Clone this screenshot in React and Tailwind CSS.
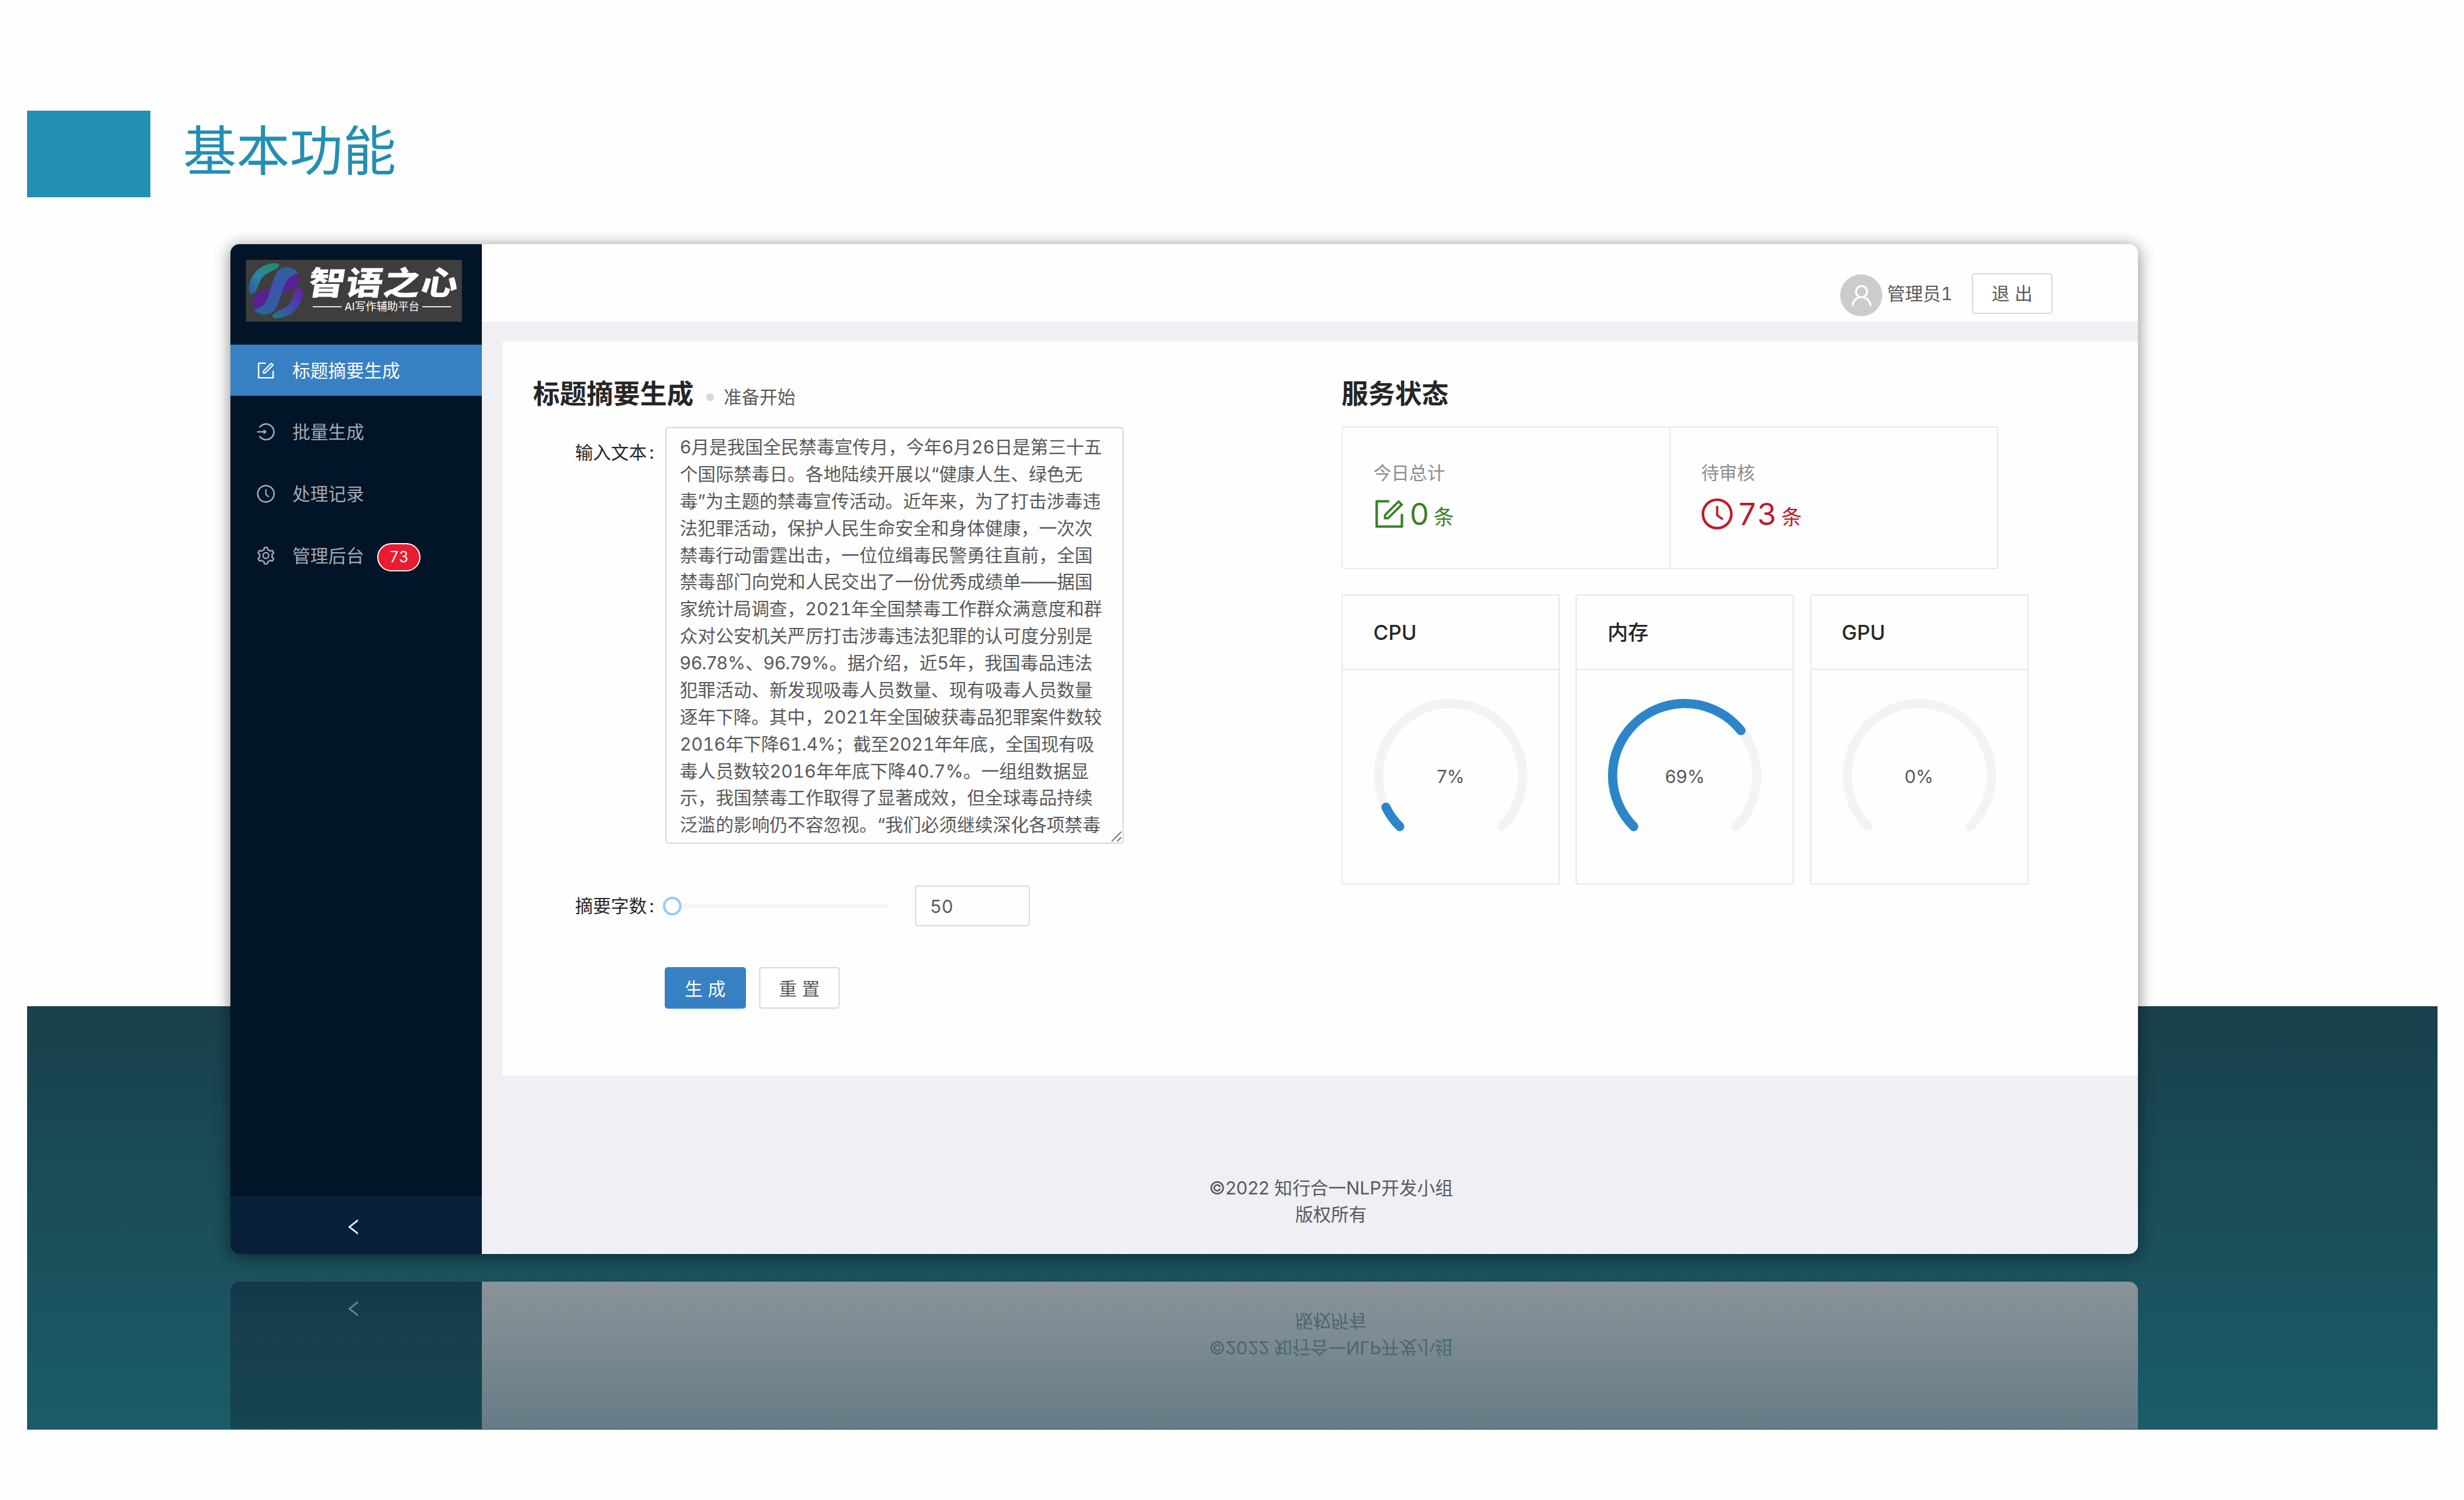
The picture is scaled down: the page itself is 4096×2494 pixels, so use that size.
import React from "react";
import {
  AiOutlineForm,
  AiOutlineLogin,
  AiOutlineClockCircle,
  AiOutlineSetting,
  AiOutlineUser,
  AiOutlineLeft,
} from "react-icons/ai";

const articleLines = [
  { text: "6月是我国全民禁毒宣传月，今年6月26日是第三十五", fit: "tracking-[-0.1px]" },
  { text: "个国际禁毒日。各地陆续开展以“健康人生、绿色无" },
  { text: "毒”为主题的禁毒宣传活动。近年来，为了打击涉毒违" },
  { text: "法犯罪活动，保护人民生命安全和身体健康，一次次" },
  { text: "禁毒行动雷霆出击，一位位缉毒民警勇往直前，全国" },
  { text: "禁毒部门向党和人民交出了一份优秀成绩单——据国" },
  { text: "家统计局调查，2021年全国禁毒工作群众满意度和群", fit: "tracking-[-0.1px]" },
  { text: "众对公安机关严厉打击涉毒违法犯罪的认可度分别是" },
  { text: "96.78%、96.79%。据介绍，近5年，我国毒品违法", fit: "normal-nums tracking-[0.12px]" },
  { text: "犯罪活动、新发现吸毒人员数量、现有吸毒人员数量" },
  { text: "逐年下降。其中，2021年全国破获毒品犯罪案件数较", fit: "tracking-[-0.1px]" },
  { text: "2016年下降61.4%；截至2021年年底，全国现有吸", fit: "tracking-[-0.32px]" },
  { text: "毒人员数较2016年年底下降40.7%。一组组数据显" },
  { text: "示，我国禁毒工作取得了显著成效，但全球毒品持续" },
  { text: "泛滥的影响仍不容忽视。“我们必须继续深化各项禁毒" },
];

const menu = [
  { label: "标题摘要生成", Icon: AiOutlineForm, active: true },
  { label: "批量生成", Icon: AiOutlineLogin },
  { label: "处理记录", Icon: AiOutlineClockCircle },
  { label: "管理后台", Icon: AiOutlineSetting, badge: "73" },
];

const gauges = [
  { name: "CPU", value: 7 },
  { name: "内存", value: 69 },
  { name: "GPU", value: 0 },
];

function BrandMark() {
  return (
    <svg viewBox="40 34 320 328" className="h-[95px] w-[93px] shrink-0">
      <defs>
        <linearGradient id="crest" x1="0" y1="1" x2="1" y2="0">
          <stop offset="0" stopColor="#2c5a9c" />
          <stop offset="0.45" stopColor="#2a86a8" />
          <stop offset="1" stopColor="#238f62" />
        </linearGradient>
        <linearGradient id="crest2" x1="1" y1="0" x2="0" y2="1">
          <stop offset="0" stopColor="#66209c" />
          <stop offset="0.5" stopColor="#4348ae" />
          <stop offset="1" stopColor="#1b8086" />
        </linearGradient>
        <linearGradient id="ribbon" x1="1" y1="0" x2="0" y2="1">
          <stop offset="0" stopColor="#2b6590" />
          <stop offset="0.5" stopColor="#3b55ab" />
          <stop offset="1" stopColor="#24688f" />
        </linearGradient>
      </defs>
      <path fill="url(#crest)" d="M45 190C44 128 92 46 190 39c34-2 38 18 12 33-42 24-68 28-87 60-16 28-26 84-52 84-13 0-18-9-18-26Z" />
      <path fill="url(#crest2)" d="M355 204c1 62-47 144-145 151-34 2-38-18-12-33 42-24 68-28 87-60 16-28 26-84 52-84 13 0 18 9 18 26Z" />
      <path fill="#5a1f92" d="M322 92c22 28 14 66-18 90-24 18-54 22-84 32 14-60 44-122 102-122Z" />
      <path fill="#5a1f92" d="M78 302c-22-28-14-66 18-90 24-18 54-22 84-32-14 60-44 122-102 122Z" />
      <path fill="url(#ribbon)" d="M206 92c24-40 88-44 124 6-42 8-66 36-80 68-20 46-26 90-52 134-26 44-92 48-126 4 42-4 66-30 78-58 20-46 30-112 56-154Z" />
    </svg>
  );
}

function Logo() {
  return (
    <div className="ml-[26px] flex h-[103px] w-[359px] items-center bg-[#3e3e3e] pl-[3px]">
      <BrandMark />
      <div className="ml-[8px] -mt-[5px] flex flex-col">
        <div className="h-[56px] w-[250px] origin-center -skew-x-8 scale-y-[0.88] whitespace-nowrap text-[61px] leading-[56px] font-black tracking-[1.5px] text-white">
          智语之心
        </div>
        <div className="mt-[1px] ml-[7px] flex w-[230px] items-center justify-between text-white">
          <span className="h-[2px] w-[48px] bg-[#e4e4e4]" />
          <span className="whitespace-nowrap text-[17.9px] leading-[20px]">AI写作辅助平台</span>
          <span className="h-[2px] w-[48px] bg-[#e4e4e4]" />
        </div>
      </div>
    </div>
  );
}

function Collapse({ tone }) {
  return (
    <div className={tone}>
      <AiOutlineLeft className="size-[34px]" />
    </div>
  );
}

function Copyright({ tone }) {
  return (
    <div className={tone}>
      <div>©2022 知行合一NLP开发小组</div>
      <div>版权所有</div>
    </div>
  );
}

function Sidebar() {
  return (
    <div className="flex w-[418px] shrink-0 flex-col bg-[#021428] pt-[26px]">
      <Logo />
      <div className="mt-[38px] flex flex-col gap-[17.7px]">
        {menu.map(({ label, Icon, active, badge }) => (
          <div
            key={label}
            className={
              active
                ? "flex h-[85px] items-center bg-[#3780c3] pl-[42px] text-white"
                : "flex h-[85px] items-center pl-[42px] text-[#a3aab3]"
            }
          >
            <Icon className="size-[34px]" />
            <span className="ml-[27px] text-[29.8px] leading-[44px]">{label}</span>
            {badge && (
              <span className="ml-[22px] mt-[5px] flex h-[47px] w-[72px] items-center justify-center rounded-full border-2 border-white bg-[#ea1c2d] text-[25px] leading-none text-white">
                {badge}
              </span>
            )}
          </div>
        ))}
      </div>
      <div className="grow" />
      <Collapse tone="flex h-[97px] w-full items-center justify-center bg-[#08213b] pt-[7px] pr-[8px] text-white" />
    </div>
  );
}

function Gauge({ value }) {
  const r = 47;
  const c = 2 * Math.PI * r;
  const sweep = c * 0.75;
  return (
    <div className="grid size-[255px] place-items-center">
      <svg viewBox="0 0 100 100" className="col-start-1 row-start-1 size-full rotate-135">
        <circle cx="50" cy="50" r={r} fill="none" stroke="#f3f3f3" strokeWidth="6" strokeLinecap="round" strokeDasharray={`${sweep} ${c}`} />
        {value > 0 && (
          <circle cx="50" cy="50" r={r} fill="none" stroke="#2c85c9" strokeWidth="6" strokeLinecap="round" strokeDasharray={`${(sweep * value) / 100} ${c}`} />
        )}
      </svg>
      <span className="col-start-1 row-start-1 pt-[4px] text-[29.8px] leading-none text-[#595959] normal-nums">{value}%</span>
    </div>
  );
}

function Stat({ title, Icon, value, tone }) {
  return (
    <div className="h-[237px] w-[547px] rounded-[3px] border-2 border-[#e8e8e8] pl-[51px] pt-[52px] not-first:-ml-[2px]">
      <div className="text-[29.8px] leading-[46px] text-[#8c8c8c]">{title}</div>
      <div className={tone}>
        <Icon className="-ml-[3px] size-[59px]" />
        <span className="ml-[4px] text-[51px] leading-[60px]">{value}</span>
        <span className="ml-[7px] mt-[11px] text-[34px] leading-[50px]">条</span>
      </div>
    </div>
  );
}

function FormPane() {
  return (
    <div className="flex w-[1395px] shrink-0 flex-col pl-[51px] pt-[57px]">
      <div className="flex h-[60px] items-center">
        <h1 className="text-[44.5px] leading-[60px] font-semibold text-[#262626]">标题摘要生成</h1>
        <span className="ml-[21px] mt-[10px] size-[13px] rounded-full bg-[#d9d9d9]" />
        <span className="ml-[16px] mt-[10px] text-[29.8px] leading-[44px] text-[#595959]">准备开始</span>
      </div>

      <div className="mt-[25px] flex">
        <div className="flex h-[84px] w-[220px] shrink-0 items-center pl-[70px] text-[29.8px] text-[#262626]">
          输入文本<span className="ml-[4px]">:</span>
        </div>
        <div className="relative h-[693px] w-[762px] overflow-hidden rounded-[5px] border-2 border-[#d9d9d9] pl-[22px] pt-[9px] text-[29.85px] leading-[44.88px] text-[#595959]">
          {articleLines.map(({ text, fit }) => (
            <div key={text} className="h-[44.88px] whitespace-nowrap">
              <span className={fit}>{text}</span>
            </div>
          ))}
          <svg viewBox="0 0 18 18" className="absolute right-[1px] bottom-[1px] size-[18px] bg-white" fill="none" stroke="#777" strokeWidth="2">
            <path d="M1 17 17 1M10 17l7-7" />
          </svg>
        </div>
      </div>

      <div className="mt-[69px] flex h-[68px] items-center">
        <div className="flex w-[216px] shrink-0 items-center pl-[70px] text-[29.8px] leading-[44px] text-[#262626]">
          摘要字数<span className="ml-[4px]">:</span>
        </div>
        <span className="size-[31px] shrink-0 rounded-full border-4 border-[#91cdee] bg-white" />
        <span className="h-[8px] w-[342px] shrink-0 rounded-r-full bg-[#f5f5f5]" />
        <div className="ml-[46px] flex h-[68px] w-[191px] items-center rounded-[5px] border-2 border-[#d9d9d9] pt-[2px] pl-[23px] text-[29.8px] text-[#595959]">
          50
        </div>
      </div>

      <div className="mt-[68px] ml-[219px] flex gap-[22px] text-[29.8px]">
        <button className="h-[69px] w-[135px] rounded-[5px] bg-[#3780c3] pt-[3px] pl-[8px] tracking-[8.4px] text-white shadow-[0_4px_0_rgba(0,0,0,0.045)]">生成</button>
        <button className="h-[69px] w-[134px] rounded-[5px] border-2 border-[#d9d9d9] bg-white pt-[3px] pl-[8px] tracking-[8.4px] text-[#595959] shadow-[0_4px_0_rgba(0,0,0,0.016)]">重置</button>
      </div>
    </div>
  );
}

function StatusPane() {
  return (
    <div className="flex flex-col pt-[57px]">
      <h1 className="text-[44.5px] leading-[60px] font-semibold text-[#262626]">服务状态</h1>
      <div className="mt-[24px] flex">
        <Stat title="今日总计" Icon={AiOutlineForm} value="0" tone="mt-[15px] flex items-center text-[#3c7f27]" />
        <Stat title="待审核" Icon={AiOutlineClockCircle} value="73" tone="mt-[15px] flex items-center text-[#bd1b27]" />
      </div>
      <div className="mt-[42px] flex gap-[26.3px]">
        {gauges.map(({ name, value }) => (
          <div key={name} className="h-[483px] w-[363px] rounded-[3px] border-2 border-[#e8e8e8]">
            <div className="flex h-[124px] items-center border-b-2 border-[#e8e8e8] pl-[51px] text-[34px] font-medium text-[#262626]">{name}</div>
            <div className="mt-[48px] flex justify-center">
              <Gauge value={value} />
            </div>
          </div>
        ))}
      </div>
    </div>
  );
}

function AppWindow() {
  return (
    <div className="flex h-[1679px] w-[3171px] overflow-hidden rounded-[15px] bg-[#efeff4] shadow-[0_4px_26px_2px_rgba(0,0,0,0.42)]">
      <Sidebar />
      <div className="flex grow flex-col">
        <div className="flex h-[129px] items-start justify-end bg-[#fefefe] pr-[142px] pt-[48px]">
          <span className="mt-[2px] flex size-[70px] items-center justify-center rounded-full bg-[#ccc] text-white">
            <AiOutlineUser className="size-[45px]" />
          </span>
          <span className="ml-[8px] w-[109px] whitespace-nowrap text-[29.8px] leading-[68px] text-[#595959]">管理员1</span>
          <button className="ml-[32px] h-[68px] w-[134px] rounded-[5px] border-2 border-[#d9d9d9] bg-white pl-[8px] text-[29.8px] tracking-[8.4px] text-[#595959]">退出</button>
        </div>
        <div className="mt-[33px] ml-[34px] flex h-[1220px] bg-[#fefefe]">
          <FormPane />
          <StatusPane />
        </div>
        <div className="pt-[165px]">
          <Copyright tone="ml-[70px] text-center text-[29.8px] leading-[44px] text-[#58595d] normal-nums" />
        </div>
      </div>
    </div>
  );
}

function Reflection() {
  return (
    <div className="mt-[46px] flex h-[245px] w-[3171px] -scale-y-100 overflow-hidden rounded-b-[15px]">
      <div className="flex w-[418px] shrink-0 flex-col justify-end bg-linear-to-t from-[#15394a] to-[#174552]">
        <Collapse tone="flex h-[97px] w-full items-center justify-center bg-linear-to-t from-[#13394b] to-[#163f4f] pt-[7px] pr-[8px] text-[#6a8892]" />
      </div>
      <div className="grow bg-linear-to-t from-[#8a9499] to-[#677c87] pt-[113px]">
        <Copyright tone="ml-[70px] text-center text-[29.8px] leading-[44px] text-[#48686f] normal-nums" />
      </div>
    </div>
  );
}

export default function App() {
  return (
    <div lang="zh-CN" className="grid h-[2494px] w-[4096px] overflow-hidden bg-[#fefefe] font-['Inter','Noto_Sans_CJK_SC',sans-serif] tabular-nums">
      <div className="col-start-1 row-start-1 flex flex-col px-[44.5px]">
        <div className="mt-[184px] flex h-[143.5px] items-center">
          <div className="h-full w-[205px] bg-[#238fb2]" />
          <div className="ml-[55px] -mt-[9px] text-[88.5px] leading-[110px] text-[#238fb2]">基本功能</div>
        </div>
        <div className="mt-[1345px] h-[704px] bg-linear-to-b from-[#19404d] to-[#1a5c68]" />
      </div>
      <div className="col-start-1 row-start-1 pt-[406px] pl-[383px]">
        <AppWindow />
        <Reflection />
      </div>
    </div>
  );
}
